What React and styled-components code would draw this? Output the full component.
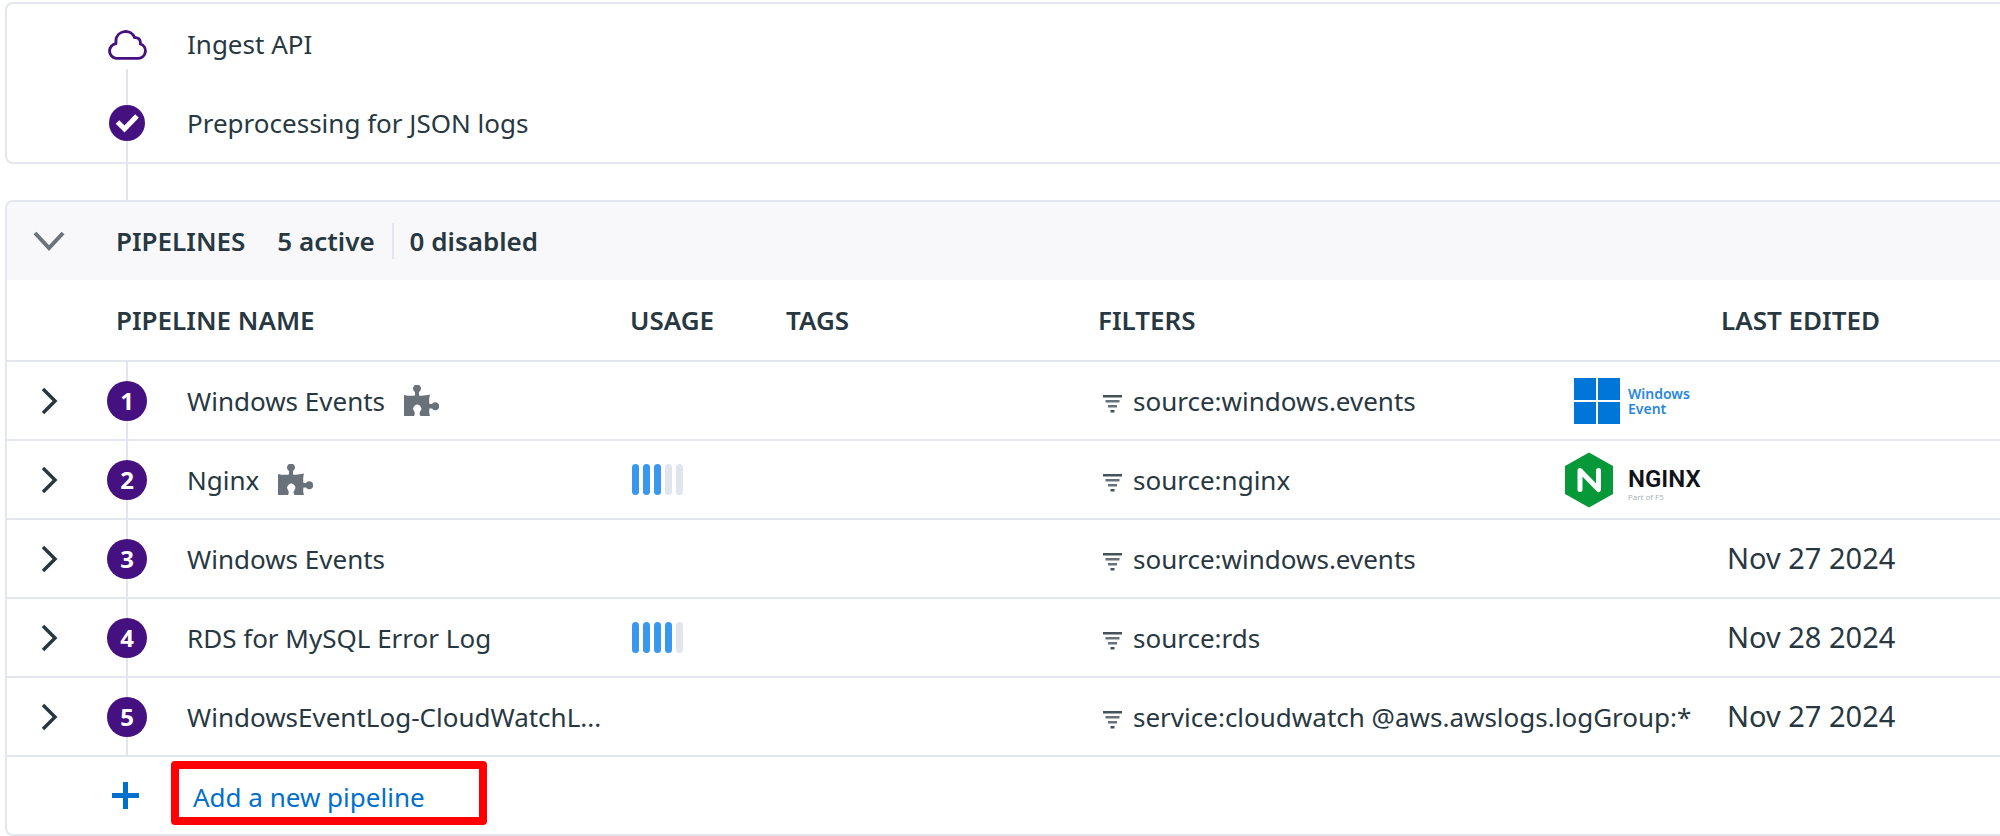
import React from 'react';
import styled, { createGlobalStyle } from 'styled-components'

const GlobalStyle = createGlobalStyle`
    * {
        box-sizing: border-box;
    }
    body {
        margin: 0;
        background: #ffffff;
        color: #283841;
        font-family: "Noto Sans", "Open Sans", sans-serif;
        font-size: 26px;
        line-height: 36px;
    }
    svg {
        flex-shrink: 0;
    }
`

const Page = styled.main`
    display: flex;
    flex-direction: column;
    padding: 2px 0 0 5px;
`
const Panel = styled.section`
    border: 2px solid #e4e6ed;
    border-right: none;
    border-radius: 8px 0 0 8px;
    overflow: hidden;
`
const StepList = styled.ul`
    margin: 0;
    padding: 0 0 0 84px;
    list-style: none;
`
const Step = styled.li`
    display: flex;
    align-items: center;
    height: 79px;
`
const StepTrack = styled.div`
    display: flex;
    flex-direction: column;
    align-items: center;
    width: 72px;
    height: 100%;
    margin-right: 24px;
`
const TrackLine = styled.span`
    flex: 1;
    width: 2px;
    background: ${props => props.$hidden ? 'transparent' : '#e4e6ed'};
`
const StepIcon = styled.span`
    display: flex;
    align-items: center;
    justify-content: center;
    height: ${props => props.$size}px;
`
const Connector = styled.div`
    width: 2px;
    height: 36px;
    margin-left: 121px;
    background: #e4e6ed;
`
const PanelHeader = styled.header`
    display: flex;
    align-items: center;
    height: 78px;
    background: #f8f8fb;
    font-weight: 600;
`
const IconButton = styled.button`
    display: flex;
    align-items: center;
    justify-content: center;
    width: 84px;
    height: 40px;
    padding: 0;
    border: none;
    background: none;
    cursor: pointer;
`
const PanelTitle = styled.h2`
    margin: 0 32px 0 25px;
    font-size: 26px;
    font-weight: 600;
`
const Count = styled.span`
    & + & {
        margin-left: 17px;
        padding-left: 16px;
        border-left: 2px solid #e4e6ed;
    }
`
const Table = styled.table`
    width: 100%;
    table-layout: fixed;
    border-collapse: separate;
    border-spacing: 0;
`
const Col = styled.col`
    width: ${props => props.$width ? props.$width + 'px' : 'auto'};
`
const HeadCell = styled.th`
    height: 82px;
    padding: 0 0 0 ${props => props.$indent || 0}px;
    border-bottom: 2px solid #e4e6ed;
    font-weight: 600;
    text-align: left;
`
const Cell = styled.td`
    height: 79px;
    padding: 0 0 0 ${props => props.$indent || 0}px;
    border-bottom: 2px solid #e4e6ed;
    white-space: nowrap;
`
const OrderCell = styled(Cell)`
    background: linear-gradient(#e4e6ed, #e4e6ed) center / 2px 100% no-repeat;
`
const OrderBadge = styled.span`
    display: flex;
    align-items: center;
    justify-content: center;
    width: 40px;
    height: 40px;
    margin: 0 auto;
    border-radius: 50%;
    background: #451080;
    color: #ffffff;
    font-size: 24px;
    font-weight: 700;
`
const NameBox = styled.div`
    display: flex;
    align-items: center;
    gap: 19px;
`
const Usage = styled.div`
    display: flex;
    gap: 4px;
    padding-left: 2px;
`
const UsageBar = styled.span`
    width: 7px;
    height: 31px;
    border-radius: 4px;
    background: ${props => props.$on ? '#3998ee' : '#e2e5ed'};
`
const FilterBox = styled.div`
    display: flex;
    align-items: center;
    gap: 11px;
    padding-left: 5px;
`
const Brand = styled.div`
    display: flex;
    align-items: center;
    width: 136px;
    margin: 0 20px 0 auto;
`
const WindowsName = styled.span`
    color: #2a86dc;
    font-size: 14px;
    font-weight: 600;
    line-height: 15px;
`
const NginxName = styled.span`
    display: flex;
    flex-direction: column;
    padding-top: 11px;
    color: #101418;
    font-family: "Roboto", sans-serif;
    font-size: 24px;
    font-weight: 600;
    line-height: 24px;
`
const NginxOwner = styled.small`
    color: #a9adb1;
    font-family: "Open Sans", sans-serif;
    font-size: 8px;
    font-weight: 400;
    line-height: 12px;
`
const DateText = styled.time`
    font-size: 29px;
`
const AddRow = styled.div`
    display: flex;
    align-items: center;
    gap: 12px;
    height: 77px;
    padding-left: 84px;
`
const PlusBox = styled.span`
    display: flex;
    justify-content: center;
    width: 68px;
`
const AddLink = styled.a`
    align-self: flex-start;
    width: 316px;
    height: 64px;
    margin-top: 4px;
    padding: 10px 14px 0;
    border: 8px solid #ff0000;
    border-radius: 4px;
    color: #0070cc;
    text-decoration: none;
`

const CloudIcon = () => (
    <svg width="40" height="32" viewBox="0 0 39 31" fill="none" stroke="#451080" strokeWidth="2.800" strokeLinejoin="round">
        <path d="M9 29.500 H30.500 A7.300 7.300 0 0 0 32.500 15.300 C33 11.500 30.500 8.800 27 9.300 A9.500 9.500 0 0 0 8.700 12 V15.200 A7.200 7.200 0 0 0 9 29.500 Z" />
    </svg>
)

const CheckIcon = () => (
    <svg width="36" height="36" viewBox="0 0 36 36" fill="none">
        <circle cx="18" cy="18" r="18" fill="#451080" />
        <path d="M8.500 17 L15.500 24 L28 11" stroke="#ffffff" strokeWidth="5" />
    </svg>
)

const ChevronDown = () => (
    <svg width="32" height="20" viewBox="0 0 32 20" fill="none">
        <path d="M2 2 L16 17 L30 2" stroke="#6b747b" strokeWidth="4" />
    </svg>
)

const ChevronRight = () => (
    <svg width="18" height="28" viewBox="0 0 18 28" fill="none">
        <path d="M3 2 L15 14 L3 26" stroke="#283841" strokeWidth="3.500" />
    </svg>
)

const PuzzleIcon = () => (
    <svg width="35" height="31" viewBox="0 0 35 31" fill="#69727a">
        <path d="M0 10 C4 11 8 11 11 10.500 V7 A4 4 0 1 1 15 7 V10.500 C18 11 22 10.500 26 9.500 C25 13 25 16 25.500 19 H28 A4 4 0 1 1 28 23.500 H25.500 C25 26 25 28 26 31 H16.500 C15 29 15.500 27 16.500 26 A4 4 0 1 0 10 26 C11 27 11 29 10 31 H0 Z" />
    </svg>
)

const FilterIcon = () => (
    <svg width="19" height="24" viewBox="0 -6 19 24" fill="#69727a">
        <path d="M0 0 H19 V2.500 H0 Z" fill="#45525a" />
        <path d="M2.500 5 H16.500 V7.500 H2.500 Z M5 10 H14 V12.500 H5 Z" />
        <path d="M7.500 15 H11.500 V17.500 H7.500 Z" fill="#45525a" />
    </svg>
)

const PlusIcon = () => (
    <svg width="27" height="27" viewBox="0 0 27 27" fill="none">
        <path d="M13.500 0 V27 M0 13.500 H27" stroke="#0070cc" strokeWidth="5" />
    </svg>
)

const WindowsBrand = () => (
    <Brand>
        <svg width="63" height="56" viewBox="0 0 63 56" fill="#0077d8">
            <path d="M9 5 H31 V27 H9 Z M33 5 H55 V27 H33 Z M9 29 H31 V51 H9 Z M33 29 H55 V51 H33 Z" />
        </svg>
        <WindowsName>Windows<br />Event</WindowsName>
    </Brand>
)

const NginxBrand = () => (
    <Brand>
        <svg width="63" height="56" viewBox="0 0 63 56">
            <path d="M24 0.500 L48 14 V42 L24 55.500 L0 42 V14 Z" fill="#079839" />
            <path d="M15 37.500 V18.500 L33.500 37.500 V18.500" fill="none" stroke="#ffffff" strokeWidth="5" strokeLinecap="round" strokeLinejoin="round" />
        </svg>
        <NginxName>NGINX<NginxOwner>Part of F5</NginxOwner></NginxName>
    </Brand>
)

const pipelines = [
    { name: 'Windows Events', integration: true, filter: 'source:windows.events', brand: <WindowsBrand /> },
    { name: 'Nginx', integration: true, usage: 3, filter: 'source:nginx', brand: <NginxBrand /> },
    { name: 'Windows Events', filter: 'source:windows.events', edited: 'Nov 27 2024' },
    { name: 'RDS for MySQL Error Log', usage: 4, filter: 'source:rds', edited: 'Nov 28 2024' },
    { name: 'WindowsEventLog-CloudWatchL...', filter: 'service:cloudwatch @aws.awslogs.logGroup:*', edited: 'Nov 27 2024' },
]

const PipelineRow = ({ pipeline, order }) => (
    <tr>
        <Cell>
            <IconButton type="button" aria-label={'Expand ' + pipeline.name}><ChevronRight /></IconButton>
        </Cell>
        <OrderCell><OrderBadge>{order}</OrderBadge></OrderCell>
        <Cell $indent={24}>
            <NameBox>
                {pipeline.name}
                {pipeline.integration && <PuzzleIcon />}
            </NameBox>
        </Cell>
        <Cell>
            {pipeline.usage && (
                <Usage>
                    {[1, 2, 3, 4, 5].map(bar => <UsageBar key={bar} $on={bar <= pipeline.usage} />)}
                </Usage>
            )}
        </Cell>
        <Cell />
        <Cell>
            <FilterBox>
                <FilterIcon />
                {pipeline.filter}
                {pipeline.brand}
            </FilterBox>
        </Cell>
        <Cell $indent={6}>
            {pipeline.edited && <DateText>{pipeline.edited}</DateText>}
        </Cell>
    </tr>
)

const App = () => (
    <Page>
        <GlobalStyle />
        <Panel>
            <StepList>
                <Step>
                    <StepTrack>
                        <TrackLine $hidden />
                        <StepIcon $size={50}><CloudIcon /></StepIcon>
                        <TrackLine />
                    </StepTrack>
                    Ingest API
                </Step>
                <Step>
                    <StepTrack>
                        <TrackLine />
                        <StepIcon $size={36}><CheckIcon /></StepIcon>
                        <TrackLine />
                    </StepTrack>
                    Preprocessing for JSON logs
                </Step>
            </StepList>
        </Panel>
        <Connector />
        <Panel>
            <PanelHeader>
                <IconButton type="button" aria-label="Collapse pipelines"><ChevronDown /></IconButton>
                <PanelTitle>PIPELINES</PanelTitle>
                <Count>5 active</Count>
                <Count>0 disabled</Count>
            </PanelHeader>
            <Table>
                <colgroup>
                    <Col $width={84} />
                    <Col $width={72} />
                    <Col $width={467} />
                    <Col $width={156} />
                    <Col $width={312} />
                    <Col $width={623} />
                    <Col />
                </colgroup>
                <thead>
                    <tr>
                        <HeadCell />
                        <HeadCell colSpan={2} $indent={25}>PIPELINE NAME</HeadCell>
                        <HeadCell>USAGE</HeadCell>
                        <HeadCell>TAGS</HeadCell>
                        <HeadCell>FILTERS</HeadCell>
                        <HeadCell>LAST EDITED</HeadCell>
                    </tr>
                </thead>
                <tbody>
                    {pipelines.map((pipeline, index) => (
                        <PipelineRow key={index} pipeline={pipeline} order={index + 1} />
                    ))}
                </tbody>
            </Table>
            <AddRow>
                <PlusBox><PlusIcon /></PlusBox>
                <AddLink href="#">Add a new pipeline</AddLink>
            </AddRow>
        </Panel>
    </Page>
)

export default App;
